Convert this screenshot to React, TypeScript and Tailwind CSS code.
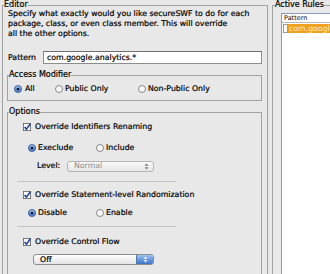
import React from 'react';

const Radio: React.FC<{ checked?: boolean }> = ({ checked }) => (
  <svg width="8" height="8" viewBox="0 0 8 8" className="shrink-0">
    <defs>
      <radialGradient id="rb" cx="50%" cy="35%" r="60%">
        <stop offset="0%" stopColor="#b9d4f6" />
        <stop offset="100%" stopColor="#3f78cf" />
      </radialGradient>
    </defs>
    {checked ? (
      <>
        <circle cx="4" cy="4" r="3.6" fill="url(#rb)" stroke="#2f4f86" strokeWidth="0.7" />
        <circle cx="4" cy="4" r="1.5" fill="#0f1a33" />
      </>
    ) : (
      <circle cx="4" cy="4" r="3.5" fill="#f7f7f7" stroke="#6f6f6f" strokeWidth="0.8" />
    )}
  </svg>
);

const Check: React.FC = () => (
  <svg width="8" height="8" viewBox="0 0 8 8" className="shrink-0">
    <rect x="0.4" y="0.4" width="7.2" height="7.2" fill="#fbfbfb" stroke="#5e5e5e" strokeWidth="0.8" />
    <path d="M1.6 3.9 L3.4 6.2 L7.4 0.6" fill="none" stroke="#23459a" strokeWidth="1.6" />
  </svg>
);

const Arrows: React.FC<{ color: string }> = ({ color }) => (
  <svg width="5" height="7" viewBox="0 0 5 7">
    <path d="M0.5 2.8 L2.5 0.5 L4.5 2.8 Z" fill={color} />
    <path d="M0.5 4.2 L2.5 6.5 L4.5 4.2 Z" fill={color} />
  </svg>
);

const Row: React.FC<{ className?: string; children: React.ReactNode }> = ({ className = '', children }) => (
  <div className={`flex items-center h-[12px] whitespace-nowrap ${className}`}>{children}</div>
);

export default function App() {
  return (
    <div className="w-[330px] h-[274px] overflow-hidden bg-[#e8e8e8] flex text-[7.8px] leading-[10px] text-black [-webkit-text-stroke:0.2px_#000] font-['DejaVu_Sans',sans-serif]">
      {/* Editor */}
      <fieldset className="ml-[2px] w-[266px] min-w-0 h-[300px] shrink-0 border border-[#a2a2a2] pl-[4px] pr-[5px]">
        <legend className="text-[8px] leading-[10px] -ml-[3px]">Editor</legend>
        <p className="-mt-px ml-px whitespace-nowrap">
          Specify what exactly would you like secureSWF to do for each
          <br />
          package, class, or even class member. This will override
          <br />
          all the other options.
        </p>

        <div className="mt-[12px] flex items-center h-[13px]">
          <span className="ml-px w-[35px]">Pattern</span>
          <div className="flex-1 h-[13px] bg-white border border-[#8c8c8c] border-t-[#6f6f6f] flex items-center pl-[3px]">
            com.google.analytics.*
          </div>
        </div>

        <fieldset className="mt-[6px] min-w-0 border border-[#a2a2a2] pb-[5px]">
          <legend className="text-[8px] leading-[10px] ml-px">Access Modifier</legend>
          <Row className="mt-[3px] pl-[6px]">
            <Radio checked />
            <span className="ml-[3px] w-[30px]">All</span>
            <Radio />
            <span className="ml-[2px] w-[73px]">Public Only</span>
            <Radio />
            <span className="ml-[2px]">Non-Public Only</span>
          </Row>
        </fieldset>

        <fieldset className="mt-[6px] min-w-0 h-[200px] border border-[#a2a2a2]">
          <legend className="text-[8px] leading-[10px] ml-px">Options</legend>
          <Row className="mt-[4px] pl-[15px]">
            <Check />
            <span className="ml-[4px]">Override Identifiers Renaming</span>
          </Row>
          <Row className="mt-[9px] pl-[20px]">
            <Radio checked />
            <span className="ml-[2px] w-[58px]">Execlude</span>
            <Radio />
            <span className="ml-[2px]">Include</span>
          </Row>
          <Row className="mt-[6px] pl-[29px]">
            <span className="w-[30px]">Level:</span>
            <div className="w-[87px] h-[11px] rounded-[3px] border border-[#b4b4b4] bg-gradient-to-b from-[#fafafa] to-[#e6e6e6] flex items-center pl-[6px] pr-[4px] text-[#8a8a8a] [-webkit-text-stroke:0]">
              <span className="flex-1">Normal</span>
              <Arrows color="#7a7a7a" />
            </div>
          </Row>
          <div className="mt-[9px] ml-[10px] w-[158px] h-px bg-[#c4c4c4]" />
          <Row className="mt-[7px] pl-[15px]">
            <Check />
            <span className="ml-[4px]">Override Statement-level Randomization</span>
          </Row>
          <Row className="mt-[6px] pl-[20px]">
            <Radio checked />
            <span className="ml-[2px] w-[58px]">Disable</span>
            <Radio />
            <span className="ml-[2px]">Enable</span>
          </Row>
          <div className="mt-[7px] ml-[10px] w-[158px] h-px bg-[#c4c4c4]" />
          <Row className="mt-[9px] pl-[15px]">
            <Check />
            <span className="ml-[4px]">Override Control Flow</span>
          </Row>
          <div className="mt-[6px] ml-[25px] w-[121px] h-[11px] rounded-[3px] border border-[#8e8e8e] bg-gradient-to-b from-white to-[#e4e4e4] flex items-center overflow-hidden">
            <span className="flex-1 pl-[6px]">Off</span>
            <div className="w-[17px] h-full bg-gradient-to-b from-[#9cc2f0] to-[#3b73c9] border-l border-[#5679ad] flex items-center justify-center">
              <Arrows color="#ffffff" />
            </div>
          </div>
        </fieldset>
      </fieldset>

      {/* Active Rules */}
      <fieldset className="ml-[4px] w-[90px] min-w-0 h-[300px] shrink-0 border border-[#a2a2a2]">
        <legend className="text-[8px] leading-[10px] ml-[2px]">Active Rules</legend>
        <div className="mt-[3px] ml-[8px] h-[300px] bg-white border border-[#8b9bb3]">
          <div className="h-[9px] border-b border-[#b9b9b9] pl-[2px] text-[6.5px] leading-[9px] [-webkit-text-stroke:0]">Pattern</div>
          <div className="flex h-[9px] mt-px">
            <div className="w-[5px] ml-px border border-[#9a9a9a] bg-white" />
            <div className="flex-1 bg-[#f0a21e] text-[#fde9c4] [-webkit-text-stroke:0] pl-px leading-[9px] whitespace-nowrap overflow-hidden">
              com.google.analytics.*
            </div>
          </div>
        </div>
      </fieldset>
    </div>
  );
}
